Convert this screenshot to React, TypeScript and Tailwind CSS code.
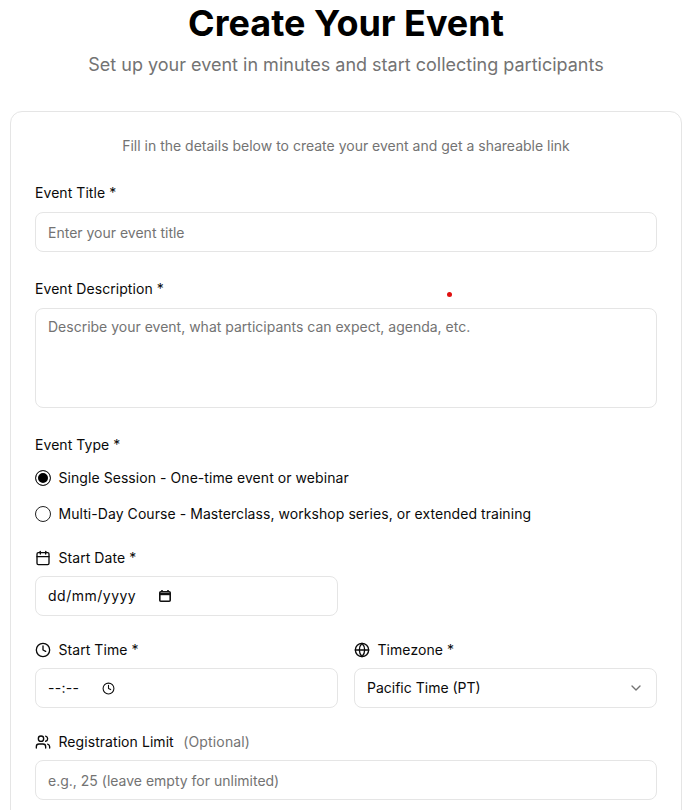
import { Calendar, ChevronDown, Clock, Globe, Users } from 'lucide-react';

function Label({ children }: { children: React.ReactNode }) {
  return <div className="flex items-center gap-[7.5px] h-5 text-sm tracking-[0.06px] text-[#0a0a0a]">{children}</div>;
}

function Radio({ checked, children }: { checked?: boolean; children: React.ReactNode }) {
  return (
    <label className="flex items-center gap-[7.5px] h-5">
      <input
        type="radio"
        name="type"
        defaultChecked={checked}
        className="appearance-none w-4 h-4 m-0 rounded-full border border-[#222] bg-white checked:bg-black checked:shadow-[inset_0_0_0_2px_white]"
      />
      {children}
    </label>
  );
}

const inputBox = 'w-full h-10 px-3 rounded-lg border border-[#e5e5e5] bg-white text-sm text-[#0a0a0a] placeholder:text-[#737373]';

export default function App() {
  return (
    <div className="relative min-h-screen bg-white pt-[3px] overflow-hidden font-['Inter',sans-serif]">
      {/* stray dot from the capture */}
      <div className="absolute left-[447px] top-[292px] w-[5px] h-[5px] rounded-full bg-[#e01010]" />

      <div className="w-[672px] ml-[10px]">
        <h1 className="text-4xl font-bold text-center text-black mb-2">Create Your Event</h1>
        <p className="text-lg text-center text-[#737373] mb-8">Set up your event in minutes and start collecting participants</p>

        <div className="border border-[#e5e5e5] rounded-xl bg-white p-6">
          <p className="text-sm text-center text-[#737373] mb-[27px]">Fill in the details below to create your event and get a shareable link</p>

          <Label>Event Title *</Label>
          <input className={`${inputBox} mt-[9px] mb-[27px] block`} placeholder="Enter your event title" />

          <Label>Event Description *</Label>
          <textarea className={`${inputBox} mt-[9px] mb-[27px] block h-[100px] py-2 resize-none`} placeholder="Describe your event, what participants can expect, agenda, etc." />

          <Label>Event Type *</Label>
          <div className="mt-[13px] flex flex-col gap-4 text-sm tracking-[0.06px] text-[#0a0a0a]">
            <Radio checked>Single Session - One-time event or webinar</Radio>
            <Radio>Multi-Day Course - Masterclass, workshop series, or extended training</Radio>
          </div>

          <div className="mt-[24px]">
            <Label><Calendar className="w-4 h-4" />Start Date *</Label>
            <div className="grid grid-cols-2 gap-4 mt-2">
              <div className={`${inputBox} flex items-center`}>
                <span className="tracking-[0.5px]">dd/mm/yyyy</span>
                <svg className="ml-[22px] w-[14px] h-[14px]" viewBox="0 0 14 14" fill="none" stroke="#111" strokeWidth="1.6">
                  <rect x="1.8" y="2.8" width="10.4" height="9.4" rx="1" />
                  <path d="M1.8 5h10.4" strokeWidth="2.4" />
                  <path d="M4 1v2M10 1v2" />
                </svg>
              </div>
            </div>
          </div>

          <div className="grid grid-cols-2 gap-4 mt-6">
            <div>
              <Label><Clock className="w-4 h-4" />Start Time *</Label>
              <div className={`${inputBox} mt-2 flex items-center`}>
                <span className="tracking-[0.3px]">--:--</span>
                <Clock className="ml-[23px] w-[13px] h-[13px] text-[#111]" strokeWidth={2} />
              </div>
            </div>
            <div>
              <Label><Globe className="w-4 h-4" />Timezone *</Label>
              <div className={`${inputBox} mt-2 flex items-center justify-between`}>
                <span>Pacific Time (PT)</span>
                <ChevronDown className="w-4 h-4 text-[#737373]" />
              </div>
            </div>
          </div>

          <div className="mt-6">
            <Label><Users className="w-4 h-4" />Registration Limit <span className="text-[#737373] ml-[2px] tracking-[0.15px]">(Optional)</span></Label>
            <input className={`${inputBox} mt-2 block`} placeholder="e.g., 25 (leave empty for unlimited)" />
          </div>
        </div>
      </div>
    </div>
  );
}
